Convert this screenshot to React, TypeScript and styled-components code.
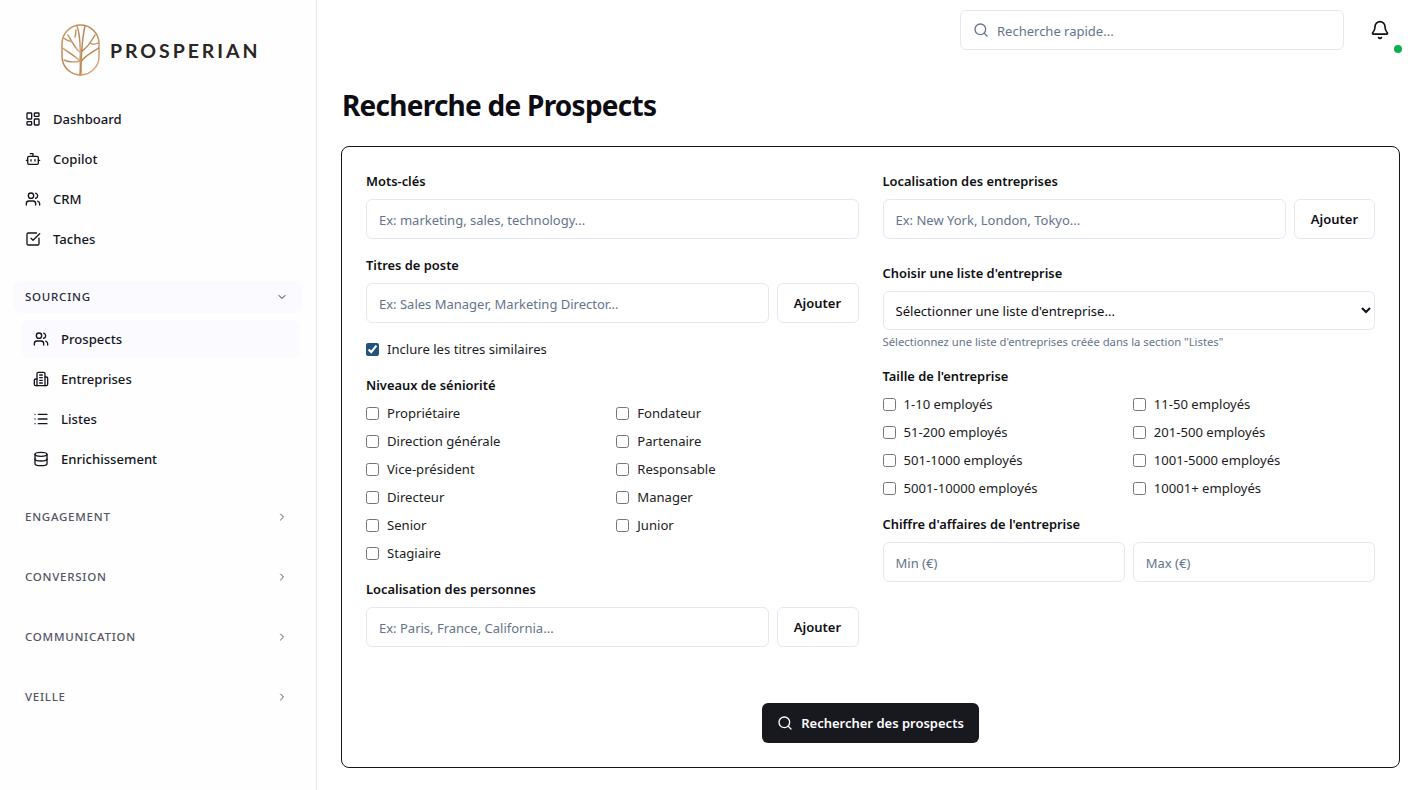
import React from "react";
import styled, { createGlobalStyle } from "styled-components";
import {
  LayoutDashboard, Bot, Users, SquareCheckBig, ChevronDown, ChevronRight,
  List, Database, Search, Bell,
} from "lucide-react";

const FONT = `"Noto Sans", "Open Sans", "Liberation Sans", sans-serif`;

const Global = createGlobalStyle`
  * { box-sizing: border-box; }
  html, body { margin: 0; height: 100%; background: #ffffff; overflow: hidden; }
  body { font-family: ${FONT}; color: #0f0f14; }
`;

const Shell = styled.div`
  display: flex;
  height: 790px;
`;

const Sidebar = styled.aside`
  width: 317px;
  flex: none;
  background: #fefeff;
  border-right: 1px solid #e3e6f3;
  padding: 0 13px;
  display: flex;
  flex-direction: column;
`;

const Brand = styled.div`
  height: 99px;
  display: flex;
  align-items: center;
  padding: 1px 0 0 48px;
  gap: 9px;
`;

const BrandName = styled.span`
  font-family: Lato, "Liberation Sans", sans-serif;
  font-size: 19.5px;
  font-weight: 700;
  letter-spacing: 2.95px;
  color: #2b2523;
`;

const NavItem = styled.a<{ $active?: boolean; $nested?: boolean }>`
  display: flex;
  align-items: center;
  gap: 12px;
  height: 38px;
  margin: 1px ${p => (p.$nested ? "3px" : "0")} 1px ${p => (p.$nested ? "8px" : "0")};
  padding-left: 12px;
  border-radius: 8px;
  font-size: 13.1px;
  font-weight: 500;
  color: #14141c;
  background: ${p => (p.$active ? "#fafaff" : "transparent")};
`;

const SectionHead = styled.div<{ $open?: boolean }>`
  display: flex;
  align-items: center;
  justify-content: space-between;
  height: 32px;
  margin-top: ${p => (p.$open ? "22px" : "0")};
  margin-bottom: ${p => (p.$open ? "6px" : "28px")};
  padding: 0 15px 1px 12px;
  border-radius: 8px;
  font-size: 11.5px;
  font-weight: 500;
  letter-spacing: 0.75px;
  color: ${p => (p.$open ? "#2a2a38" : "#545563")};
  background: ${p => (p.$open ? "#fafaff" : "transparent")};
`;

const SourcingList = styled.div`
  display: flex;
  flex-direction: column;
  margin-bottom: 22px;
`;

const Main = styled.main`
  flex: 1;
  min-width: 0;
  padding: 10px 15px 0 24px;
  display: flex;
  flex-direction: column;
`;

const TopBar = styled.div`
  display: flex;
  justify-content: flex-end;
  align-items: center;
  height: 40px;
`;

const SearchBox = styled.label`
  width: 384px;
  height: 40px;
  display: flex;
  align-items: center;
  gap: 8px;
  padding: 0 12px;
  border: 1px solid #e5e7f2;
  border-radius: 6px;
  color: #64748b;
`;

const SearchInput = styled.input`
  flex: 1;
  min-width: 0;
  border: 0;
  outline: 0;
  padding: 2px 0 0;
  background: transparent;
  font: 400 13px ${FONT};
  &::placeholder { color: #64748b; opacity: 1; }
`;

const BellWrap = styled.div`
  position: relative;
  width: 56px;
  height: 40px;
  display: flex;
  align-items: center;
  padding-left: 26px;
  color: #111;
`;

const Dot = styled.span`
  position: absolute;
  right: -2px;
  bottom: -3px;
  width: 8px;
  height: 8px;
  border-radius: 50%;
  background: #0cb14b;
`;

const Title = styled.h1`
  margin: 37px 0 23px 1px;
  height: 36px;
  line-height: 36px;
  font-size: 28px;
  font-weight: 700;
  letter-spacing: -0.75px;
  color: #0c0c12;
`;

const Card = styled.section`
  height: 622px;
  border: 1px solid #14141a;
  border-radius: 8px;
  padding: 24px;
  display: flex;
  flex-direction: column;
`;

const Columns = styled.div`
  display: grid;
  grid-template-columns: 1fr 1fr;
  column-gap: 24px;
`;

const Column = styled.div`
  display: flex;
  flex-direction: column;
  min-width: 0;
`;

const Label = styled.div<{ $top?: number }>`
  height: 20px;
  line-height: 20px;
  margin-top: ${p => p.$top ?? 0}px;
  margin-bottom: 8px;
  font-size: 12.9px;
  font-weight: 600;
  color: #0f0f14;
`;

const Row = styled.div`
  display: flex;
  gap: 8px;
`;

const TextInput = styled.input`
  flex: 1;
  min-width: 0;
  height: 40px;
  padding: 2px 12px 0;
  border: 1px solid #e5e7f2;
  border-radius: 6px;
  background: #fff;
  outline: 0;
  font: 400 13px ${FONT};
  &::placeholder { color: #64748b; opacity: 1; }
`;

const AddButton = styled.button<{ $narrow?: boolean }>`
  flex: none;
  width: ${p => (p.$narrow ? "81px" : "82px")};
  height: 40px;
  border: 1px solid #e5e7f2;
  border-radius: 6px;
  background: #fff;
  font: 600 13px ${FONT};
  color: #0f0f14;
`;

const Select = styled.select`
  width: 100%;
  height: 39px;
  padding: 0 8px;
  border: 1px solid #e5e7f2;
  border-radius: 6px;
  background: #fff;
  outline: 0;
  font: 400 13.1px ${FONT};
  color: #0f0f14;
`;

const Hint = styled.div`
  margin-top: 4px;
  height: 16px;
  line-height: 16px;
  font-size: 11.25px;
  color: #64748b;
`;

const CheckRow = styled.label<{ $top?: number }>`
  display: flex;
  align-items: center;
  gap: 8px;
  height: 20px;
  margin-top: ${p => p.$top ?? 0}px;
  font-size: 13.1px;
  color: #1c1c24;
`;

const Box = styled.input.attrs({ type: "checkbox" })`
  width: 13px;
  height: 13px;
  margin: 0;
  accent-color: #24527f;
`;

const CheckGrid = styled.div`
  display: grid;
  grid-template-columns: 1fr 1fr;
  gap: 8px;
`;

const Footer = styled.div`
  display: flex;
  justify-content: center;
  margin-top: 56px;
`;

const SubmitButton = styled.button`
  display: flex;
  align-items: center;
  justify-content: center;
  gap: 8px;
  width: 217px;
  height: 40px;
  border: 0;
  border-radius: 6px;
  background: #18181f;
  color: #fff;
  font: 600 13px ${FONT};
`;

const Logo = () => (
  <svg width="40" height="52" viewBox="0 0 40 52" fill="none" stroke="url(#lg)" strokeWidth="1.5" strokeLinecap="round">
    <defs>
      <linearGradient id="lg" x1="0" y1="0" x2="1" y2="1">
        <stop offset="0" stopColor="#c89a6c" />
        <stop offset="0.5" stopColor="#b9854f" />
        <stop offset="1" stopColor="#d9b48f" />
      </linearGradient>
    </defs>
    <rect x="1" y="1" width="37" height="50" rx="18.5" />
    <path d="M19 51c.4-6 .4-12 .2-18M20.5 51c-.4-6-.4-12-.2-18M19.8 51V33" />
    <path d="M19.5 36C19 24 20 12 16 2" />
    <path d="M20 36C21 26 21 14 24 2" />
    <path d="M19 37C14 32 7 28 1.5 24" />
    <path d="M20.5 37C25 31 32 28 37.5 24" />
    <path d="M18.5 28C14 24 11 18 7 11" />
    <path d="M21 27C26 24 30 18 34 11" />
    <path d="M11 18C8 17 5 16 2.5 14" />
    <path d="M29 19C32 21 34 21 37 19" />
    <path d="M19 37C14 39 7 38 3 36" />
    <path d="M14 13C15 10 15 8 15 6" />
  </svg>
);

const Building = () => (
  <svg width="16" height="16" viewBox="0 0 24 24" fill="none" stroke="currentColor" strokeWidth="2" strokeLinecap="round" strokeLinejoin="round">
    <path d="M6 22V4a2 2 0 0 1 2-2h8a2 2 0 0 1 2 2v18Z" />
    <path d="M6 12H4a2 2 0 0 0-2 2v6a2 2 0 0 0 2 2h2" />
    <path d="M18 9h2a2 2 0 0 1 2 2v9a2 2 0 0 1-2 2h-2" />
    <path d="M10 6h4M10 10h4M10 14h4M10 18h4" />
  </svg>
);

const seniority = [
  "Propriétaire", "Fondateur", "Direction générale", "Partenaire", "Vice-président", "Responsable",
  "Directeur", "Manager", "Senior", "Junior", "Stagiaire",
];
const sizes = [
  "1-10 employés", "11-50 employés", "51-200 employés", "201-500 employés",
  "501-1000 employés", "1001-5000 employés", "5001-10000 employés", "10001+ employés",
];

const Check = ({ text }: { text: string }) => (
  <CheckRow><Box />{text}</CheckRow>
);

export default function App() {
  return (
    <Shell>
      <Global />
      <Sidebar>
        <Brand>
          <Logo />
          <BrandName>PROSPERIAN</BrandName>
        </Brand>
        <NavItem><LayoutDashboard size={16} />Dashboard</NavItem>
        <NavItem><Bot size={16} />Copilot</NavItem>
        <NavItem><Users size={16} />CRM</NavItem>
        <NavItem><SquareCheckBig size={16} />Taches</NavItem>
        <SectionHead $open>SOURCING<ChevronDown size={12} /></SectionHead>
        <SourcingList>
          <NavItem $nested $active><Users size={16} />Prospects</NavItem>
          <NavItem $nested><Building />Entreprises</NavItem>
          <NavItem $nested><List size={16} />Listes</NavItem>
          <NavItem $nested><Database size={16} />Enrichissement</NavItem>
        </SourcingList>
        <SectionHead>ENGAGEMENT<ChevronRight size={12} /></SectionHead>
        <SectionHead>CONVERSION<ChevronRight size={12} /></SectionHead>
        <SectionHead>COMMUNICATION<ChevronRight size={12} /></SectionHead>
        <SectionHead>VEILLE<ChevronRight size={12} /></SectionHead>
      </Sidebar>
      <Main>
        <TopBar>
          <SearchBox>
            <Search size={16} />
            <SearchInput placeholder="Recherche rapide..." />
          </SearchBox>
          <BellWrap>
            <Bell size={20} />
            <Dot />
          </BellWrap>
        </TopBar>
        <Title>Recherche de Prospects</Title>
        <Card>
          <Columns>
            <Column>
              <Label>Mots-clés</Label>
              <Row>
                <TextInput placeholder="Ex: marketing, sales, technology..." />
              </Row>
              <Label $top={16}>Titres de poste</Label>
              <Row>
                <TextInput placeholder="Ex: Sales Manager, Marketing Director..." />
                <AddButton>Ajouter</AddButton>
              </Row>
              <CheckRow $top={16}><Box defaultChecked />Inclure les titres similaires</CheckRow>
              <Label $top={16}>Niveaux de séniorité</Label>
              <CheckGrid>
                {seniority.map(s => <Check key={s} text={s} />)}
              </CheckGrid>
              <Label $top={16}>Localisation des personnes</Label>
              <Row>
                <TextInput placeholder="Ex: Paris, France, California..." />
                <AddButton>Ajouter</AddButton>
              </Row>
            </Column>
            <Column>
              <Label>Localisation des entreprises</Label>
              <Row>
                <TextInput placeholder="Ex: New York, London, Tokyo..." />
                <AddButton $narrow>Ajouter</AddButton>
              </Row>
              <Label $top={24}>Choisir une liste d'entreprise</Label>
              <Select defaultValue="">
                <option value="">Sélectionner une liste d'entreprise...</option>
              </Select>
              <Hint>Sélectionnez une liste d'entreprises créée dans la section "Listes"</Hint>
              <Label $top={16}>Taille de l'entreprise</Label>
              <CheckGrid>
                {sizes.map(s => <Check key={s} text={s} />)}
              </CheckGrid>
              <Label $top={16}>Chiffre d'affaires de l'entreprise</Label>
              <Row>
                <TextInput placeholder="Min (€)" />
                <TextInput placeholder="Max (€)" />
              </Row>
            </Column>
          </Columns>
          <Footer>
            <SubmitButton><Search size={16} />Rechercher des prospects</SubmitButton>
          </Footer>
        </Card>
      </Main>
    </Shell>
  );
}
